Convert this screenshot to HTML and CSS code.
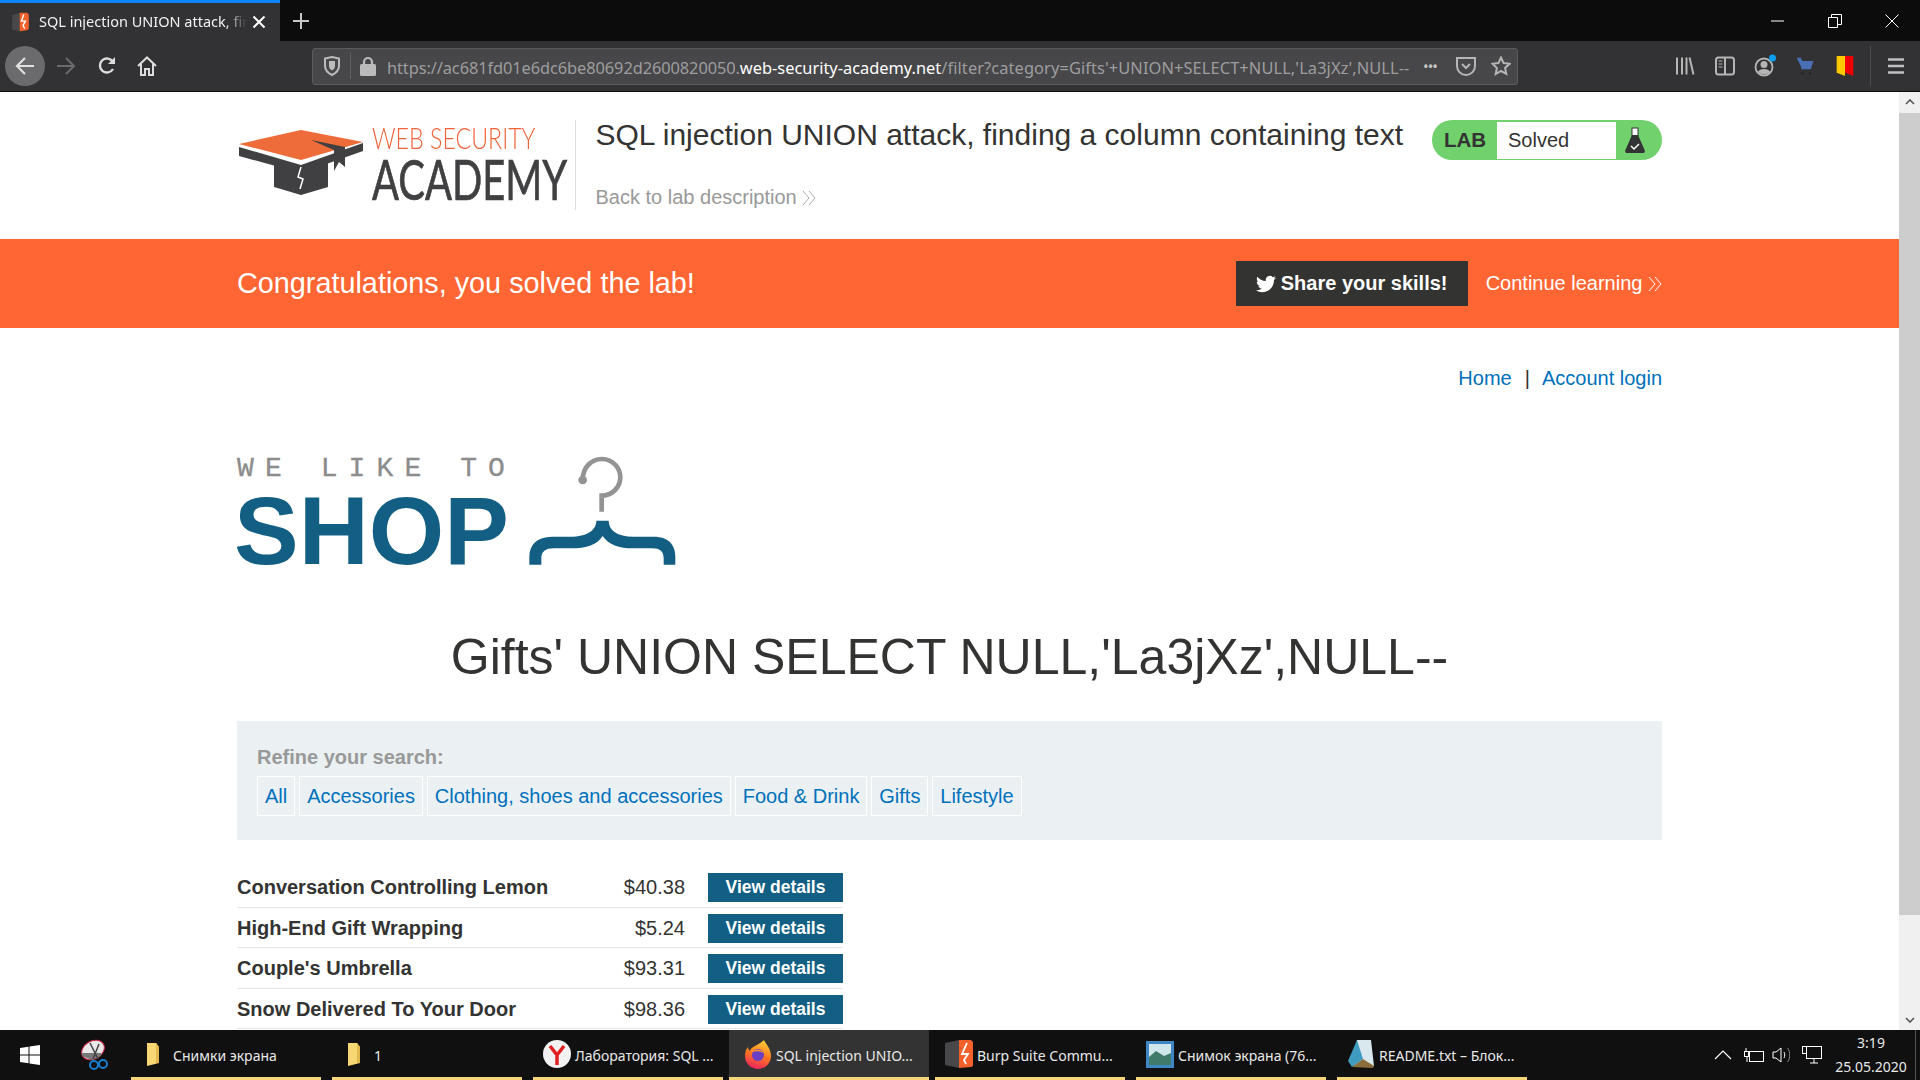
FILE: index.html
```html
<!DOCTYPE html>
<html lang="en">
<head>
<meta charset="utf-8">
<title>SQL injection UNION attack, finding a column containing text</title>
<link rel="stylesheet" href="styles.css">
</head>
<body>
<div class="tabbar">
  <div class="tab">
    <svg class="favicon" viewBox="0 0 20 24"><path fill="#48484a" d="M0 4 9 1v22l-9-2z"/><path fill="#f2612c" d="M9 1h9l2 2v17l-2 2-9 1z"/><path fill="none" stroke="#fff" stroke-width="1.600" d="M14 3 11 11h5l-3 5 2 4"/></svg>
    <span class="tab-title">SQL injection UNION attack, fin</span>
    <svg class="tab-close" viewBox="0 0 14 14"><path d="M1.500 1.500 12.500 12.500M12.500 1.500 1.500 12.500" stroke="#fff" stroke-width="2"/></svg>
  </div>
  <svg class="newtab" viewBox="0 0 18 18"><path d="M9 1v16M1 9h16" stroke="#c8c8c8" stroke-width="2"/></svg>
  <div class="winctl">
    <svg class="wc" viewBox="0 0 14 14"><path d="M0 7h13" stroke="#fff"/></svg>
    <svg class="wc" viewBox="0 0 14 14"><path fill="none" stroke="#fff" d="M.5 3.500h9v10h-9zM3.500 3.500v-3h10v10h-4"/></svg>
    <svg class="wc" viewBox="0 0 14 14"><path d="M.5.5l13 13M13.500.5l-13 13" stroke="#fff"/></svg>
  </div>
</div>
<div class="toolbar">
  <div class="tbtn back"><svg viewBox="0 0 20 20"><path d="M19 10H2M10 2l-8 8 8 8" fill="none" stroke="#e0e0e0" stroke-width="2.200"/></svg></div>
  <div class="tbtn fwd"><svg viewBox="0 0 20 20"><path d="M1 10h17M10 2l8 8-8 8" fill="none" stroke="#6b6b6d" stroke-width="2"/></svg></div>
  <div class="tbtn nudge"><svg viewBox="0 0 20 20"><path d="M16 13a7 7 0 1 1 0-7" fill="none" stroke="#ddd" stroke-width="2.400"/><path d="M18 1v7h-7z" fill="#ddd"/></svg></div>
  <div class="tbtn"><svg viewBox="0 0 20 20"><path d="M1 10 10 1.500 19 10M4 8v11h4v-6h4v6h4V8" fill="none" stroke="#ddd" stroke-width="2"/></svg></div>
  <div class="urlbar">
    <svg class="ub-icon shield" viewBox="0 0 18 20"><path d="M2 2.500 9 1l7 1.500V10c0 4-3 7-7 9-4-2-7-5-7-9z" fill="none" stroke="#bbb" stroke-width="2"/><path d="M6 5h6v5c0 2-1.500 3.500-3 4.500C7.500 13.500 6 12 6 10z" fill="#bbb"/></svg>
    <span class="ub-sep"></span>
    <svg class="ub-icon lock" viewBox="0 0 16 20"><path d="M4 9V6a4 4 0 0 1 8 0v3" fill="none" stroke="#bbb" stroke-width="2.200"/><rect x="0" y="8" width="16" height="12" rx="1.500" fill="#bbb"/></svg>
    <div class="url"><span class="dim origin">https://ac681fd01e6dc6be80692d2600820050.</span><span class="host">web-security-academy.net</span><span class="dim query">/filter?category=Gifts'+UNION+SELECT+NULL,'La3jXz',NULL--</span></div>
    <span class="dots">•••</span>
    <svg class="ub-icon pocket" viewBox="0 0 20 20"><path d="M1 2h18v8a9 9 0 0 1-18 0z" fill="none" stroke="#b5b5b5" stroke-width="2"/><path d="M6 8l4 4 4-4" fill="none" stroke="#b5b5b5" stroke-width="2"/></svg>
    <svg class="ub-icon star" viewBox="0 0 20 20"><path d="M10 1.500l2.600 5.600 6 .7-4.500 4.100 1.200 6L10 15l-5.300 3 1.200-6L1.400 7.800l6-.7z" fill="none" stroke="#b5b5b5" stroke-width="2"/></svg>
  </div>
  <div class="tools">
    <div class="tbtn"><svg viewBox="0 0 20 20"><path d="M2 1.500v17M7 1.500v17M11.500 1.500v17M14.500 1.500l4 17" stroke="#b5b5b5" stroke-width="2" fill="none"/></svg></div>
    <div class="tbtn"><svg viewBox="0 0 20 20"><rect x="1" y="1.500" width="18" height="17" rx="2.500" fill="none" stroke="#b5b5b5" stroke-width="2"/><path d="M10 2v16" stroke="#b5b5b5" stroke-width="2"/><path d="M3.500 5h4M3.500 8h4M3.500 11h4" stroke="#b5b5b5"/></svg></div>
    <div class="tbtn acct"><svg viewBox="0 0 24 24"><circle cx="11" cy="13" r="8.500" fill="none" stroke="#b5b5b5" stroke-width="1.800"/><circle cx="11" cy="10.500" r="3.500" fill="#b5b5b5"/><path d="M5 18c1-4 11-4 12 0-3 3-9 3-12 0z" fill="#b5b5b5"/><circle cx="19.500" cy="4" r="3.500" fill="#0a9ff5"/></svg></div>
    <div class="tbtn"><svg viewBox="0 0 22 24"><path d="M1 2h4l3 4h13l-3 10H8z" fill="#4a6fb5"/><path d="M5 2l3 14" stroke="#4a6fb5" stroke-width="2"/><circle cx="8" cy="21" r="1.500" fill="#222"/><circle cx="17" cy="21" r="1.500" fill="#222"/></svg></div>
    <div class="tbtn"><svg viewBox="0 0 20 24"><path d="M0 0h10v24l-10-4z" fill="#fcc800"/><path d="M10 0h10v24l-10-4z" fill="#ee0000"/></svg></div>
    <span class="tool-sep"></span>
    <div class="tbtn"><svg viewBox="0 0 20 20"><path d="M2 3.500h16M2 10h16M2 16.500h16" stroke="#c0c0c0" stroke-width="2.600"/></svg></div>
  </div>
</div>

<div class="viewport">
  <main class="page">
    <header class="acad">
      <div class="wrap acad-row">
        <div class="acad-logo">
          <svg class="cap" viewBox="0 0 128 70">
            <path fill="#404042" d="M2 20 64 38 126 16V24L64 46 2 29z"/>
            <path fill="#404042" d="M37 36 64 44 91 34V60L64 68 37 60z"/>
            <path fill="#ee6b3a" d="M2 17 64 3 126 15 64 33z"/>
            <path fill="#404042" d="M74 13 108 20 108 40 102 35 97 44 97 23z"/>
            <path fill="none" stroke="#fff" stroke-width="1.500" d="M64 40 61 50 66 52 63 62"/>
          </svg>
          <div class="acad-words">
            <span class="w1">WEB SECURITY</span>
            <span class="w2">ACADEMY</span>
          </div>
        </div>
        <span class="acad-sep"></span>
        <div class="acad-title">
          <h2>SQL injection UNION attack, finding a column containing text</h2>
          <a class="back-link">Back to lab description <svg class="chev" viewBox="0 0 14 16"><path d="M1 1l6 7-6 7M7 1l6 7-6 7" fill="none" stroke="#aaa"/></svg></a>
        </div>
        <div class="badge">
          <span class="badge-lab">LAB</span>
          <span class="badge-status">Solved</span>
          <svg class="flask" viewBox="0 0 20 26"><rect x="7" y="1" width="6" height="8" fill="#fff" stroke="#333"/><path d="M7 8h6l7 16-1 2H1l-1-2z" fill="#333"/><path d="M6 19l3 3 5-5" fill="none" stroke="#fff" stroke-width="1.500"/></svg>
        </div>
      </div>
    </header>
    <section class="banner">
      <div class="wrap banner-row">
        <h4>Congratulations, you solved the lab!</h4>
        <a class="share"><svg viewBox="0 0 24 24"><path fill="#fff" d="M23.950 4.570a10 10 0 0 1-2.820.77 4.960 4.960 0 0 0 2.160-2.720c-.95.55-2 .96-3.120 1.190a4.920 4.920 0 0 0-8.380 4.480C7.690 8.100 4.070 6.130 1.640 3.160a4.820 4.820 0 0 0-.66 2.470c0 1.710.87 3.210 2.190 4.100a4.900 4.900 0 0 1-2.230-.61v.06a4.920 4.920 0 0 0 3.950 4.830 5 5 0 0 1-2.210.08 4.940 4.940 0 0 0 4.600 3.420A9.870 9.870 0 0 1 0 19.540a14 14 0 0 0 7.560 2.210c9.050 0 14-7.500 14-13.980 0-.21 0-.42-.02-.63a9.940 9.940 0 0 0 2.460-2.550z"/></svg>Share your skills!</a>
        <a class="cont">Continue learning <svg class="chev" viewBox="0 0 14 16"><path d="M1 1l6 7-6 7M7 1l6 7-6 7" fill="none" stroke="#fff"/></svg></a>
      </div>
    </section>
    <div class="wrap">
      <nav class="topnav"><a>Home</a><span class="pipe">|</span><a>Account login</a></nav>
      <div class="shop-logo">
        <div class="shop-words">
          <span class="like">WE LIKE TO</span>
          <span class="shop">SHOP</span>
        </div>
        <svg class="hanger" viewBox="920 75 450 335">
          <path fill="none" stroke="#939393" stroke-width="14" d="M1087 150C1087 110 1115 87 1145 87C1175 87 1200 112 1200 142C1200 172 1175 197 1144 197V245"/>
          <circle cx="1087" cy="150" r="13" fill="#939393"/>
          <path fill="#135f84" d="M1128 272H1165C1165 300 1190 320 1240 320H1300C1345 320 1365 345 1365 380V404H1330V385C1330 365 1320 355 1295 355H1240C1195 355 1165 345 1147 318C1130 345 1100 355 1050 355H1000C975 355 963 365 963 385V404H927V380C927 345 950 320 995 320H1050C1100 320 1128 300 1128 272Z"/>
        </svg>
      </div>
      <h1>Gifts' UNION SELECT NULL,'La3jXz',NULL--</h1>
      <section class="filter">
        <div class="filter-label">Refine your search:</div>
        <div class="pills">
          <a>All</a><a>Accessories</a><a>Clothing, shoes and accessories</a><a>Food &amp; Drink</a><a>Gifts</a><a>Lifestyle</a>
        </div>
      </section>
      <div class="products">
        <div class="prod"><b>Conversation Controlling Lemon</b><span>$40.38</span><a>View details</a></div>
        <div class="prod"><b>High-End Gift Wrapping</b><span>$5.24</span><a>View details</a></div>
        <div class="prod"><b>Couple's Umbrella</b><span>$93.31</span><a>View details</a></div>
        <div class="prod"><b>Snow Delivered To Your Door</b><span>$98.36</span><a>View details</a></div>
      </div>
    </div>
  </main>
  <aside class="scrollbar">
    <div class="sb-btn"><svg viewBox="0 0 10 6"><path d="M1 5l4-4 4 4" fill="none" stroke="#555" stroke-width="1.600"/></svg></div>
    <div class="sb-thumb"></div>
    <div class="sb-track"></div>
    <div class="sb-btn"><svg viewBox="0 0 10 6"><path d="M1 1l4 4 4-4" fill="none" stroke="#555" stroke-width="1.600"/></svg></div>
  </aside>
</div>

<footer class="taskbar">
  <svg class="start" viewBox="0 0 20 20"><path fill="#fff" d="M0 3l8.500-1.200V9.500H0zM9.500 1.600 20 0v9.500H9.500zM0 10.500h8.500v7.700L0 17zM9.500 10.500H20V20L9.500 18.400z"/></svg>
  <svg class="snip" viewBox="0 0 30 32"><ellipse cx="13" cy="11" rx="12" ry="9" fill="#e8e8e8" stroke="#c24" transform="rotate(-30 13 11)"/><path d="M2 17l10 4 9-4v-3L2 14z" fill="#777"/><path d="M10 4l8 16M19 5l-6 15" stroke="#444" stroke-width="1.500"/><circle cx="14" cy="26" r="4" fill="none" stroke="#1a7fd0" stroke-width="2"/><circle cx="23" cy="25" r="4" fill="none" stroke="#1a7fd0" stroke-width="2"/></svg>
  <div class="tasks">
    <div class="task"><svg viewBox="0 0 30 30"><path d="M7 4h9l3 4v16l-12 3z" fill="#f7d774"/><path d="M16 4l3 4v16h-3z" fill="#e2b84e"/></svg><span>Снимки экрана</span></div>
    <div class="task"><svg viewBox="0 0 30 30"><path d="M7 4h9l3 4v16l-12 3z" fill="#f7d774"/><path d="M16 4l3 4v16h-3z" fill="#e2b84e"/></svg><span>1</span></div>
    <div class="task"><svg viewBox="0 0 30 30"><circle cx="15" cy="15" r="14" fill="#f2f2f2"/><path d="M8 7l7 9 7-9M15 16v10" fill="none" stroke="#e02020" stroke-width="3.500"/></svg><span>Лаборатория: SQL ...</span></div>
    <div class="task active"><svg viewBox="0 0 30 30"><defs><linearGradient id="fx" x1="0.700" y1="0" x2="0.400" y2="1"><stop offset="0" stop-color="#ffd03a"/><stop offset=".5" stop-color="#ff7a1f"/><stop offset="1" stop-color="#e8245e"/></linearGradient></defs><path d="M21 1c1 3 7 8 7 16a13 13 0 0 1-26 0c0-4 1-7 3-9 0 2 1 3 2 4 1-5 8-5 14-11z" fill="url(#fx)"/><circle cx="15" cy="16" r="6" fill="#6a3fc4"/><path d="M9 13c3-3 9-3 12 1-4-2-8-2-12-1z" fill="#ff9a26"/></svg><span>SQL injection UNIO...</span></div>
    <div class="task"><svg viewBox="0 0 30 30"><path d="M1 4l14-3v28l-14-3z" fill="#48484a"/><path d="M15 1h12l2 2v24l-2 1-12 1z" fill="#f2612c"/><path d="M23 4l-5 11h6l-4 6 2 4" fill="none" stroke="#fff" stroke-width="1.800"/></svg><span>Burp Suite Commu...</span></div>
    <div class="task"><svg viewBox="0 0 30 30"><rect x="1" y="2" width="28" height="27" fill="#3f86c4"/><rect x="4" y="5" width="22" height="21" fill="#cfe6ea"/><path d="M4 18l7-6 8 5 7-3v12H4z" fill="#3f7a6a"/></svg><span>Снимок экрана (76...</span></div>
    <div class="task"><svg viewBox="0 0 30 30"><path d="M11 1h14l3 26H8z" fill="#d8e8ee"/><path d="M11 1 2 22l4 6 11-8z" fill="#3f9cc0"/><path d="M6 28 17 20l11 7-1 2z" fill="#8a6d3b"/></svg><span>README.txt – Блок...</span></div>
  </div>
  <div class="tray">
    <svg class="t-caret" viewBox="0 0 18 10"><path d="M1 9l8-8 8 8" fill="none" stroke="#fff" stroke-width="1.200"/></svg>
    <svg class="t-batt" viewBox="0 0 20 14"><rect x="5.500" y="3.500" width="14" height="10" fill="none" stroke="#fff"/><rect x=".5" y="3.500" width="4" height="5" fill="none" stroke="#fff"/><path d="M2 0v3M3 9v5" stroke="#fff"/></svg>
    <svg class="t-vol" viewBox="0 0 18 16"><path d="M1 5h3l5-4v14l-5-4H1z" fill="none" stroke="#fff"/><path d="M12 5c1 2 1 4 0 6" fill="none" stroke="#fff"/><path d="M15.500 1c3 4 3 10 0 14" fill="none" stroke="#888"/></svg>
    <svg class="t-net" viewBox="0 0 20 18"><rect x="4.500" y=".5" width="15" height="12" fill="none" stroke="#fff"/><rect x=".5" y=".5" width="4" height="7" fill="#111" stroke="#fff"/><path d="M12 13v4M8 17h8" stroke="#fff"/></svg>
    <div class="clock"><span>3:19</span><span>25.05.2020</span></div>
    <span class="show-desk"></span>
  </div>
</footer>
</body>
</html>
```

FILE: styles.css
```css
* { box-sizing: border-box; }
html, body { margin: 0; height: 100%; }
body {
  display: flex;
  flex-direction: column;
  height: 1080px;
  overflow: hidden;
  background: #fff;
  color: #333332;
  font-family: "Liberation Sans", Arial, sans-serif;
  font-size: 20px;
}
a { color: #0071bc; text-decoration: none; }

/* browser chrome */
.tabbar {
  display: flex;
  align-items: center;
  height: 41px;
  flex: none;
  background: #0c0c0d;
  font-family: "Noto Sans", sans-serif;
}
.tab {
  display: flex;
  align-items: center;
  width: 280px;
  height: 41px;
  background: #323234;
  border-top: 3px solid #0a84ff;
  padding-left: 11px;
}
.favicon { width: 19px; height: 20px; flex: none; }
.tab-title {
  margin-left: 9px;
  width: 212px;
  flex: none;
  overflow: hidden;
  white-space: nowrap;
  color: #f2f2f2;
  font-size: 14.500px;
  line-height: 18px;
  margin-top: -2px;
  -webkit-mask-image: linear-gradient(to right, #000 88%, transparent 98%);
  mask-image: linear-gradient(to right, #000 88%, transparent 98%);
}
.tab-close { width: 14px; height: 14px; margin-left: 1px; }
.newtab { width: 18px; height: 18px; margin-left: 12px; }
.winctl {
  margin-left: auto;
  display: flex;
  gap: 43px;
  padding-right: 21px;
}
.wc { width: 14px; height: 14px; }

.toolbar {
  display: flex;
  align-items: center;
  flex: none;
  height: 51px;
  background: #323234;
  border-bottom: 1px solid #0c0c0d;
  padding-left: 5px;
}
.tbtn {
  width: 40px;
  height: 40px;
  flex: none;
  display: flex;
  align-items: center;
  justify-content: center;
}
.tbtn svg { width: 20px; height: 20px; }
.tbtn.back { background: #6b6b6d; border-radius: 50%; }
.tbtn.fwd { margin-left: 1px; }
.tbtn.nudge { margin-left: 1px; }
.tbtn.acct svg { width: 24px; height: 24px; }
.urlbar {
  display: flex;
  align-items: center;
  margin-left: 145px;
  width: 1206px;
  height: 37px;
  background: #474749;
  border: 1px solid #5b5b5d;
  border-radius: 3px;
  padding-left: 10px;
  font-family: "Noto Sans", sans-serif;
  font-size: 16.400px;
}
.ub-icon { flex: none; width: 18px; height: 20px; }
.ub-sep { width: 1px; height: 26px; background: #616163; margin: 0 9px; }
.lock { width: 16px; height: 20px; }
.url { margin-left: 11px; padding-top: 3px; white-space: nowrap; width: 1028px; overflow: hidden; flex: none; }
.dim { color: #9d9d9f; }
.origin { letter-spacing: -.09px; }
.query { letter-spacing: .1px; }
.host { color: #fff; }
.dots { color: #c4c4c4; font-size: 15px; width: 24px; margin-left: 8px; flex: none; white-space: nowrap; letter-spacing: -1px; }
.pocket { width: 20px; margin-left: 9px; }
.star { width: 20px; margin-left: 15px; }
.tools { display: flex; align-items: center; margin-left: auto; padding-right: 4px; }
.tool-sep { width: 1px; height: 40px; background: #4d4d4f; margin: 0 5px; }

/* page */
.viewport { flex: 1; display: flex; min-height: 0; }
.page { flex: 1; min-width: 0; overflow: hidden; }
.wrap { width: 1425px; margin: 0 auto; }
.acad { height: 147px; }
.acad-row { display: flex; align-items: flex-start; padding-top: 28px; }
.acad-logo { display: flex; width: 337.500px; margin-top: 8px; }
.cap { width: 128px; height: 70px; flex: none; margin-top: -1px; }
.acad-words { display: flex; flex-direction: column; margin-left: 7px; margin-top: -3px; font-family: Lato, sans-serif; }
.w1, .w2 { display: block; white-space: nowrap; transform-origin: left top; }
.w1 { color: #f0633a; font-size: 29px; line-height: 26px; font-weight: 300; transform: scaleX(.8); }
.w2 { color: #404042; font-size: 57px; line-height: 54px; font-weight: 400; transform: scaleX(.7); -webkit-text-stroke: .7px #404042; }
.acad-sep { width: 1px; height: 90px; background: #ddd; flex: none; }
.acad-title { flex: 1; margin-left: 20px; margin-top: -5px; }
.acad-title h2 { margin: 0; font-size: 30px; font-weight: 400; line-height: 40px; color: #333332; white-space: nowrap; }
.back-link { display: block; margin-top: 30px; color: #999; line-height: 24px; }
.chev { width: 14px; height: 16px; vertical-align: -2px; }
.badge {
  display: flex;
  align-items: center;
  width: 230px;
  height: 40px;
  background: #70d16d;
  border-radius: 20px;
  flex: none;
}
.badge-lab { width: 65px; padding-left: 12px; font-weight: 700; font-size: 20.500px; }
.badge-status { width: 119px; height: 37px; background: #fff; padding-left: 11px; line-height: 37px; }
.flask { width: 20px; height: 26px; margin-left: 9px; }

.banner { height: 89px; background: #ff6633; color: #fff; }
.banner-row { display: flex; align-items: center; height: 100%; }
.banner-row h4 { margin: 0; flex: 1; font-size: 28.800px; font-weight: 400; }
.share {
  display: flex;
  align-items: center;
  height: 45px;
  width: 232px;
  justify-content: center;
  gap: 5px;
  background: #333332;
  color: #fff;
  font-weight: 700;
}
.share svg { width: 20px; height: 20px; }
.cont { color: #fff; margin-left: 18px; white-space: nowrap; }

.topnav { display: flex; justify-content: flex-end; padding-top: 38px; line-height: 24px; height: 62px; }
.pipe { margin: 0 12px 0 13px; }
.shop-logo { display: flex; height: 115px; margin-top: 65px; }
.shop-words { display: flex; flex-direction: column; width: 290px; }
.like {
  font-family: "Liberation Mono", monospace;
  color: #8c8c8c;
  font-size: 28px;
  line-height: 28px;
  letter-spacing: 11.100px;
  white-space: nowrap;
  -webkit-text-stroke: .3px #8c8c8c;
}
.shop {
  color: #135f84;
  font-weight: 700;
  font-size: 97px;
  line-height: 86px;
  margin-left: -3px;
  margin-top: 5px;
}
.hanger { width: 150px; height: 111.670px; }
h1 {
  margin: 57px 0 0;
  height: 60px;
  line-height: 60px;
  font-size: 50px;
  font-weight: 400;
  text-align: center;
  color: #333332;
}
.filter {
  margin-top: 34px;
  height: 119px;
  background: #ebf0f2;
  padding: 24px 20px 0;
}
.filter-label { color: #999; font-weight: 700; line-height: 24px; }
.pills { display: flex; gap: 3.900px; margin-top: 7px; }
.pills a {
  border: 1px solid #fff;
  height: 40px;
  line-height: 38px;
  padding: 0 7px;
}
.products { margin-top: 27px; width: 606px; }
.prod {
  display: grid;
  grid-template-columns: 1fr auto 135px;
  column-gap: 23px;
  align-items: center;
  height: 40.500px;
  padding-top: 2px;
  border-bottom: 1px solid #e6e6e6;
}
.prod b { color: #333332; }
.prod a {
  background: #135f84;
  color: #fff;
  font-weight: 700;
  font-size: 17.500px;
  height: 29px;
  line-height: 29px;
  text-align: center;
}

.scrollbar { width: 21px; flex: none; display: flex; flex-direction: column; background: #f0f0f0; }
.sb-btn { height: 20px; display: flex; align-items: center; justify-content: center; }
.sb-btn svg { width: 10px; height: 6px; }
.sb-thumb { height: 802px; background: #cdcdcd; margin-top: 1px; }
.sb-track { flex: 1; }

/* taskbar */
.taskbar {
  display: flex;
  align-items: center;
  height: 50px;
  flex: none;
  background: #101010;
  color: #e8e8e8;
  font-family: "Noto Sans", sans-serif;
  font-size: 14px;
}
.start { width: 20px; height: 20px; margin-left: 20px; flex: none; }
.snip { width: 30px; height: 32px; margin-left: 40px; flex: none; }
.tasks { display: flex; gap: 11px; margin-left: 21px; height: 100%; }
.task {
  display: flex;
  align-items: center;
  gap: 3px;
  width: 190px;
  height: 100%;
  padding-left: 9px;
  border-bottom: 3px solid #f7d67b;
  white-space: nowrap;
}
.task span { padding-top: 3px; }
.task svg { width: 30px; height: 30px; flex: none; }
.task.active { background: #333; width: 200px; margin: 0 -5px; padding-left: 14px; }
.tray { margin-left: auto; display: flex; align-items: center; height: 100%; }
.t-caret { width: 18px; height: 10px; }
.t-batt { width: 20px; height: 14px; margin-left: 12px; }
.t-vol { width: 18px; height: 16px; margin-left: 8px; }
.t-net { width: 20px; height: 18px; margin-left: 12px; }
.clock {
  display: flex;
  flex-direction: column;
  align-items: center;
  width: 72px;
  margin-left: 13px;
  line-height: 24px;
  font-size: 14px;
}
.show-desk { width: 1px; height: 100%; background: #555; margin: 0 4px 0 8px; }
```
